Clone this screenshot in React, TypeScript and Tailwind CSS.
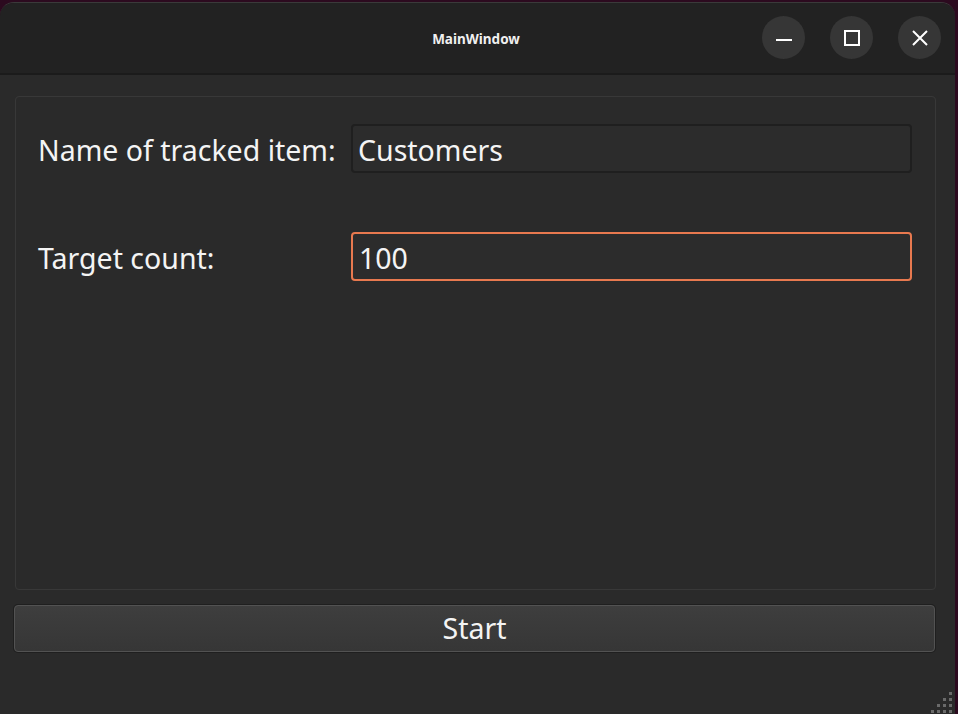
import { useState } from 'react';

function SizeGrip() {
    // little dotted triangle in the bottom-right corner
    const dots: [number, number][] = [];
    for (let row = 0; row < 4; row++) {
        for (let col = 0; col <= row; col++) {
            dots.push([18 - col * 6, row * 6]);
        }
    }
    return (
        <svg width="22" height="22" viewBox="0 0 22 22" className="block">
            {dots.map(([x, y], i) => (
                <rect key={i} x={x} y={y} width="3" height="3" fill="#6a6a6a" />
            ))}
        </svg>
    );
}

function TitleButton({ children }: { children: React.ReactNode }) {
    return (
        <button className="w-[43px] h-[43px] rounded-full bg-[#363636] flex items-center justify-center text-white">
            {children}
        </button>
    );
}

export default function App() {
    const [name, setName] = useState('Customers');
    const [target, setTarget] = useState('100');

    return (
        <div
            className="w-[958px] h-[714px] bg-[#2c0a1f] pt-[2px] pr-[3px] overflow-hidden"
            style={{ fontFamily: '"Noto Sans", "Open Sans", sans-serif' }}
        >
            <div className="h-full rounded-t-[14px] overflow-hidden flex flex-col border-t border-[#3a3a3a]">
                {/* Title bar */}
                <div className="h-[72px] bg-[#222222] border-b-2 border-[#1b1b1b] grid grid-cols-[1fr_auto_1fr] items-center">
                    <div />
                    <div className="text-[13.5px] font-bold text-[#f0f0f0] pr-[3px] mt-[3px]">MainWindow</div>
                    <div className="flex justify-end items-center gap-[25px] pr-[14px] -mt-[1px]">
                        <TitleButton>
                            <svg width="16" height="16" viewBox="0 0 16 16" className="mt-[8px]">
                                <rect x="0" y="5" width="16" height="2" fill="#ffffff" />
                            </svg>
                        </TitleButton>
                        <TitleButton>
                            <svg width="16" height="16" viewBox="0 0 16 16">
                                <rect x="1" y="1" width="14" height="14" fill="none" stroke="#ffffff" strokeWidth="2" />
                            </svg>
                        </TitleButton>
                        <TitleButton>
                            <svg width="16" height="16" viewBox="0 0 16 16">
                                <path d="M1 1 L15 15 M15 1 L1 15" stroke="#ffffff" strokeWidth="2" />
                            </svg>
                        </TitleButton>
                    </div>
                </div>

                {/* Body */}
                <div className="flex-1 bg-[#2a2a2a] flex flex-col pl-[15px] pr-[19px] pt-[21px]">
                    <div className="h-[494px] border border-[#383838] rounded-[4px] pl-[22px] pr-[23px] pt-[27px]">
                        <div className="flex items-center h-[49px]">
                            <label className="w-[313px] pt-[3px] text-[28.5px] text-[#f4f4f4] leading-none">Name of tracked item:</label>
                            <input
                                value={name}
                                onChange={(e) => setName(e.target.value)}
                                className="flex-1 h-[49px] bg-[#2c2c2c] border-2 border-[#1f1f1f] rounded-[4px] px-[5px] pt-[2px] text-[28.5px] text-[#f4f4f4] outline-none"
                            />
                        </div>
                        <div className="flex items-center h-[49px] mt-[59px]">
                            <label className="w-[313px] pt-[3px] text-[28.5px] text-[#f4f4f4] leading-none">Target count:</label>
                            <input
                                value={target}
                                onChange={(e) => setTarget(e.target.value)}
                                className="flex-1 h-[49px] bg-[#2c2c2c] border-2 border-[#e8794f] rounded-[4px] px-[6px] pt-[2px] text-[28.5px] text-[#f4f4f4] outline-none"
                            />
                        </div>
                    </div>

                    <button className="mt-[15px] -ml-[1px] mr-[1px] h-[47px] rounded-[4px] border border-[#525252] bg-gradient-to-b from-[#3e3e3e] to-[#363636] shadow-[0_0_0_1px_#1f1f1f] text-[28.5px] text-[#f4f4f4]">
                        Start
                    </button>

                    <div className="flex-1 flex items-end justify-end -mr-[17px]">
                        <SizeGrip />
                    </div>
                </div>
            </div>
        </div>
    );
}
